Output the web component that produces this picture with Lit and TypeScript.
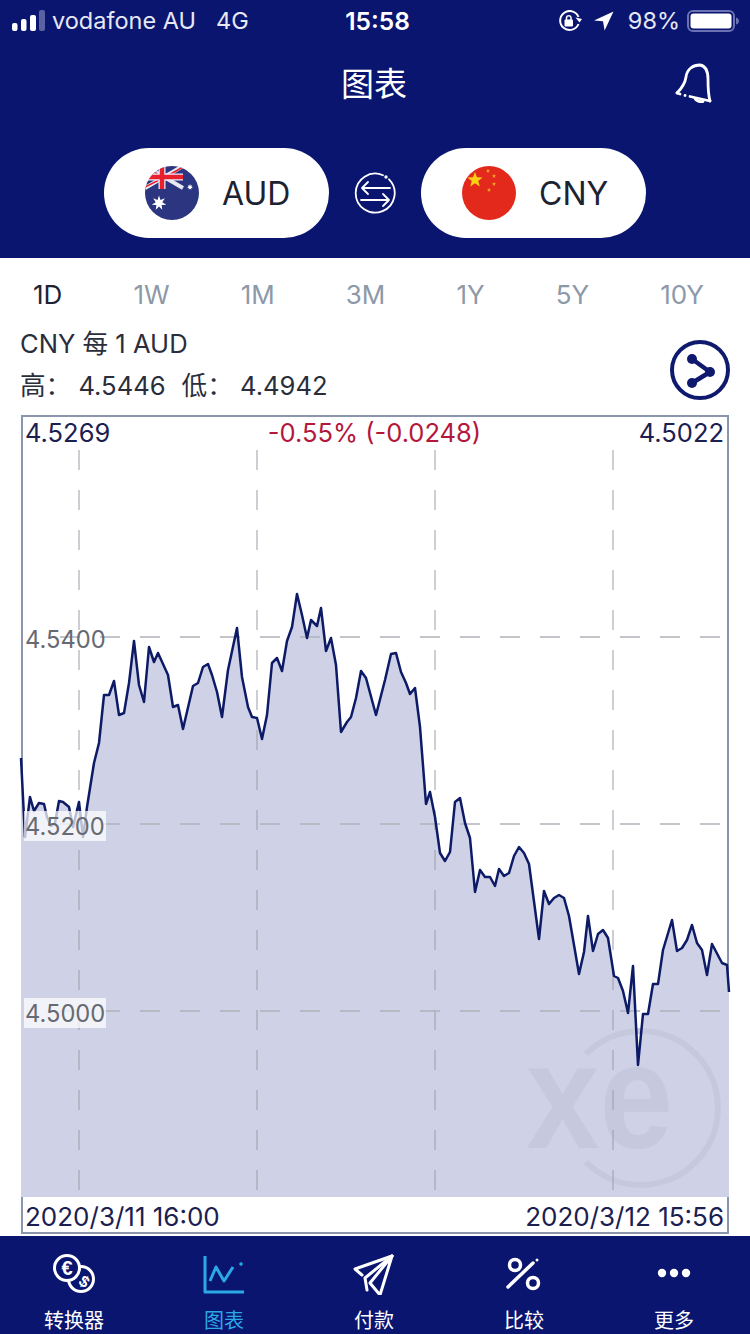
import { LitElement, html, css, svg } from 'lit';
import { customElement } from 'lit/decorators.js';

// page coordinates of the rate line, read off the screenshot
const RATE_LINE: [number, number][] = [
  [21,758],[25,837],[30,797],[34,811],[39,803],[44,804],[47,817],[51,826],[55,823],[59,801],[63,802],[69,807],[73,827],[79,802],[83,837],
  [87,807],[94,763],[99,743],[104,695],[109,695],[114,681],[119,715],[124,713],[129,683],[134,641],[139,685],[144,702],[149,647],[154,662],
  [158,653],[168,675],[173,707],[178,705],[183,729],[193,686],[198,683],[203,667],[208,664],[212,675],[217,692],[222,717],[228,670],[237,628],
  [242,677],[248,707],[252,717],[257,718],[262,739],[267,715],[272,663],[277,658],[282,671],[287,641],[292,627],[297,594],[302,615],[307,638],
  [311,620],[317,626],[321,608],[326,651],[331,638],[336,665],[341,732],[347,722],[351,717],[356,698],[361,671],[366,678],[376,715],[385,680],
  [391,654],[396,653],[401,672],[406,683],[410,694],[415,688],[420,727],[426,804],[430,792],[435,817],[440,853],[445,861],[450,852],[455,802],
  [460,798],[465,823],[470,838],[475,892],[480,870],[485,877],[490,877],[495,886],[499,869],[504,876],[509,873],[514,856],[519,847],[524,853],
  [529,864],[539,939],[544,891],[549,904],[554,898],[559,895],[564,898],[569,916],[579,974],[584,952],[588,916],[593,951],[598,934],[603,930],
  [608,938],[614,976],[618,978],[623,991],[628,1013],[633,966],[638,1065],[643,1014],[648,1014],[653,984],[658,984],[663,950],[672,920],[677,951],
  [682,948],[687,940],[692,925],[697,943],[702,950],[707,975],[712,944],[722,963],[727,965],[729,992],
];

const RANGES = ['1D', '1W', '1M', '3M', '1Y', '5Y', '10Y'];

const linePoints = RATE_LINE.map((p) => p.join(',')).join(' ');
const areaPoints = `21,1197 ${linePoints} 729,1197`;

// n pointed star, for the flags
function star(cx: number, cy: number, r: number, n: number, inner: number) {
  const pts: string[] = [];
  for (let i = 0; i < n * 2; i++) {
    const a = -Math.PI / 2 + (i * Math.PI) / n;
    const d = i % 2 ? r * inner : r;
    pts.push(`${(cx + d * Math.cos(a)).toFixed(2)},${(cy + d * Math.sin(a)).toFixed(2)}`);
  }
  return pts.join(' ');
}

const ausFlag = html`<svg class="flag" viewBox="0 0 54 54">
  <defs><clipPath id="au"><circle cx="27" cy="27" r="27"></circle></clipPath></defs>
  <g clip-path="url(#au)">
    <rect width="54" height="54" fill="#2b3580"></rect>
    <path d="M0 0L38 22M38 0L0 22" stroke="#e9e9f2" stroke-width="4"></path>
    <path d="M0 1L14 9M38 1L24 9M0 21L14 14" stroke="#e8202c" stroke-width="1.500"></path>
    <path d="M17 0V23M0 11H38" stroke="#eef" stroke-width="7"></path>
    <path d="M17 0V23M0 11H38" stroke="#e8202c" stroke-width="4.500"></path>
    <polygon points=${star(14, 37, 7.5, 7, 0.45)} fill="#fff"></polygon>
    <polygon points=${star(45, 21, 3, 7, 0.5)} fill="#fff"></polygon>
  </g>
</svg>`;

const cnFlag = html`<svg class="flag" viewBox="0 0 54 54">
  <circle cx="27" cy="27" r="27" fill="#e2291c"></circle>
  <polygon points=${star(13, 14, 8, 5, 0.42)} fill="#fbd116"></polygon>
  <polygon points=${star(26, 5, 2.2, 5, 0.42)} fill="#f5a623"></polygon>
  <polygon points=${star(32, 10, 2.2, 5, 0.42)} fill="#f5a623"></polygon>
  <polygon points=${star(32, 18, 2.2, 5, 0.42)} fill="#f5a623"></polygon>
  <polygon points=${star(27, 24, 2.2, 5, 0.42)} fill="#f5a623"></polygon>
</svg>`;

@customElement('app-root')
export class AppRoot extends LitElement {
  static styles = css`
    :host {
      display: block;
      width: 750px;
      height: 1334px;
      overflow: hidden;
      background: #fff;
      font-family: Inter, 'Noto Sans CJK SC', sans-serif;
      color: #1d2233;
    }
    .top {
      height: 258px;
      background: #0a1570;
      color: #fff;
      display: flex;
      flex-direction: column;
    }
    .status {
      height: 41px;
      margin-bottom: 1px;
      display: grid;
      grid-template-columns: 1fr auto 1fr;
      align-items: center;
      padding: 0 11px 0 12px;
      font-size: 23.5px;
      color: #e6e8f4;
    }
    .status .left, .status .right { display: flex; align-items: center; }
    .status .right { justify-content: flex-end; }
    .status .carrier { margin-left: 7px; }
    .status .net { margin-left: 20px; }
    .status .time { margin-left: 4px; font-weight: 600; font-size: 24.5px; color: #fff; }
    .status .pct { margin: 0 7px 0 14px; }
    .title {
      height: 84px;
      display: grid;
      grid-template-columns: 1fr auto 1fr;
      align-items: center;
      padding: 0 35px 0 33px;
      font-size: 33px;
    }
    .title span { margin-bottom: 4px; }
    .title svg { justify-self: end; }
    .pair {
      display: flex;
      justify-content: center;
      align-items: center;
      gap: 25px;
      margin-top: 22px;
    }
    .pill {
      width: 225px;
      height: 90px;
      border-radius: 45px;
      background: #fff;
      color: #1d2233;
      display: flex;
      align-items: center;
      box-sizing: border-box;
      padding-left: 41px;
      gap: 23px;
      font-size: 32px;
    }
    .flag { width: 54px; height: 54px; display: block; }
    .ranges {
      display: flex;
      justify-content: space-between;
      padding: 0 46px 0 33px;
      height: 72px;
      align-items: center;
      font-size: 26px;
      color: #8d99a8;
    }
    .ranges .on { color: #1d2233; }
    .info {
      display: flex;
      justify-content: space-between;
      padding: 0 20px 0 20px;
      height: 85px;
    }
    .info .lines { margin-top: -7px; font-size: 25.6px; line-height: 42px; color: #2a2e3c; }
    .info .stats { display: flex; gap: 16px; }
    .info svg { margin-top: 10px; }
    .chart {
      margin: 0 21px;
      height: 819px;
      box-sizing: border-box;
      border: 2px solid #8b95ad;
      display: flex;
      flex-direction: column;
      font-size: 26px;
      color: #1b2050;
    }
    .chart .head, .chart .foot {
      display: flex;
      justify-content: space-between;
      align-items: center;
      box-sizing: border-box;
      padding-left: 2px;
      padding-right: 3px;
    }
    .chart .head { height: 33px; padding-bottom: 3px; font-size: 25.5px; }
    .chart .foot { height: 34px; padding-top: 4px; }
    .chart .change { color: #b3173c; }
    .chart svg { display: block; overflow: visible; }
    .axis { font: 23.7px Inter, sans-serif; fill: #666a72; }
    nav {
      margin-top: 2px;
      height: 98px;
      background: #0a1570;
      display: grid;
      grid-template-columns: repeat(5, 150px);
      color: #fff;
    }
    nav .item {
      display: flex;
      flex-direction: column;
      align-items: center;
      font-size: 20px;
      line-height: 24px;
      position: relative;
      left: -1px;
    }
    nav .item svg { display: block; margin-top: 15px; margin-bottom: 14px; }
    nav .on { color: #2aa9e6; }
  `;

  private axisLabel(y: number, text: string, backed: boolean) {
    return svg`
      ${backed ? svg`<rect x="24" y=${y - 15} width="82" height="30" fill="#fff" opacity="0.72"></rect>` : ''}
      <text class="axis" x="25" y=${y + 9}>${text}</text>`;
  }

  private chartSvg() {
    const vertical = [79, 257, 435, 613];
    const horizontal = [637, 824, 1011];
    return html`<svg width="704" height="747" viewBox="23 450 704 747">
      <polygon points=${areaPoints} fill="#cfd2e6"></polygon>
      <text x="526" y="1148" fill="#c6c9de" font-family="Liberation Sans" font-weight="700" font-size="150" textLength="147" lengthAdjust="spacingAndGlyphs">xe</text>
      <path d="M586 1054A77 77 0 1 1 586 1162" fill="none" stroke="#c6c9de" stroke-width="6"></path>
      ${vertical.map((x) => svg`<line x1=${x} x2=${x} y1="450" y2="1197" stroke="#9a9da6" stroke-width="1" stroke-dasharray="20 20"></line>`)}
      ${horizontal.map((y) => svg`<line x1="60" x2="727" y1=${y} y2=${y} stroke="#b0b2ba" stroke-width="1.500" stroke-dasharray="20 20"></line>`)}
      <polyline points=${linePoints} fill="none" stroke="#0d1a66" stroke-width="2.500" stroke-linejoin="round"></polyline>
      ${this.axisLabel(639, '4.5400', false)}
      ${this.axisLabel(826, '4.5200', true)}
      ${this.axisLabel(1013, '4.5000', true)}
    </svg>`;
  }

  render() {
    return html`
      <div class="top">
        <div class="status">
          <span class="left">
            <svg width="33" height="21" viewBox="0 0 33 21">
              <rect x="0" y="13" width="5.500" height="8" rx="2" fill="#fff"></rect>
              <rect x="9" y="9" width="5.500" height="12" rx="2" fill="#fff"></rect>
              <rect x="18" y="5" width="6" height="16" rx="2" fill="#fff"></rect>
              <rect x="27" y="0" width="6" height="21" rx="2" fill="#5a62a3"></rect>
            </svg>
            <span class="carrier">vodafone AU</span>
            <span class="net">4G</span>
          </span>
          <span class="time">15:58</span>
          <span class="right">
            <svg width="24" height="22" viewBox="0 0 24 22" fill="none">
              <path d="M20.500 7A9.500 9.500 0 1 0 20.500 14" stroke="#fff" stroke-width="2"></path>
              <path d="M17.500 7.500L24 9l-2.500 3.500z" fill="#fff"></path>
              <rect x="6.500" y="9.500" width="8.500" height="7" rx="1" fill="#fff"></rect>
              <path d="M8.500 10V7.500a2.300 2.300 0 0 1 4.500 0V10" stroke="#fff" stroke-width="1.500"></path>
            </svg>
            <svg style="margin-left:12px" width="20" height="20" viewBox="0 0 20 20">
              <path d="M19.500 .5L0 9.500l9 .8 1.600 9.200z" fill="#fff"></path>
            </svg>
            <span class="pct">98%</span>
            <svg width="52" height="22" viewBox="0 0 52 22" fill="none">
              <rect x="1" y="1" width="46" height="20" rx="5" stroke="#6a72b3" stroke-width="2"></rect>
              <rect x="3.500" y="3.500" width="41" height="15" rx="3" fill="#fff"></rect>
              <path d="M49 7.500c2 .5 3 2 3 3.500s-1 3-3 3.500z" fill="#6a72b3"></path>
            </svg>
          </span>
        </div>
        <div class="title">
          <i></i>
          <span>图表</span>
          <svg width="40" height="44" viewBox="0 0 40 44" fill="none" stroke="#fff" stroke-width="2.800" stroke-linecap="round" stroke-linejoin="round">
            <path d="M2 31C7 26 10 22 11 15 12 7 18 3 25 3 31 4 33 9 33 17 33 25 33 32 35 39"></path>
            <path d="M2 31L5 32M10 33.500h.1M15 34.500L35 39"></path>
            <path d="M20 36.500c1 2.500 5 3.500 8 3"></path>
          </svg>
        </div>
        <div class="pair">
          <div class="pill">${ausFlag}<span>AUD</span></div>
          <svg width="42" height="42" viewBox="0 0 42 42" fill="none" stroke="#fff" stroke-width="1.800" stroke-linecap="round" stroke-linejoin="round">
            <path d="M35 7.300A19.500 19.500 0 1 1 29 3.200"></path>
            <circle cx="32" cy="5" r="0.800" fill="#fff"></circle>
            <path d="M36 16H8M14 10L8 16 14 22"></path>
            <path d="M7 28H35M29 22L35 28 29 34"></path>
          </svg>
          <div class="pill">${cnFlag}<span>CNY</span></div>
        </div>
      </div>

      <div class="ranges">
        ${RANGES.map((r, i) => html`<span class=${i === 0 ? 'on' : ''}>${r}</span>`)}
      </div>

      <div class="info">
        <div class="lines">
          <div>CNY 每 1 AUD</div>
          <div class="stats"><span>高： 4.5446</span><span>低： 4.4942</span></div>
        </div>
        <svg width="60" height="60" viewBox="0 0 60 60" fill="none">
          <circle cx="30" cy="30" r="28" stroke="#0f1a6e" stroke-width="4"></circle>
          <path d="M22 19L40 32 22 43" stroke="#0f1a6e" stroke-width="4.500"></path>
          <circle cx="22" cy="19" r="5" fill="#0f1a6e"></circle>
          <circle cx="40" cy="32" r="5" fill="#0f1a6e"></circle>
          <circle cx="22" cy="43" r="5" fill="#0f1a6e"></circle>
        </svg>
      </div>

      <div class="chart">
        <div class="head">
          <span>4.5269</span>
          <span class="change">-0.55% (-0.0248)</span>
          <span>4.5022</span>
        </div>
        ${this.chartSvg()}
        <div class="foot">
          <span>2020/3/11 16:00</span>
          <span>2020/3/12 15:56</span>
        </div>
      </div>

      <nav>
        <div class="item">
          <svg width="46" height="44" viewBox="0 0 46 44" fill="none" stroke="#fff" stroke-width="3">
            <circle cx="30" cy="28" r="12.500"></circle>
            <circle cx="16" cy="17" r="12.500" fill="#0a1570"></circle>
            <text x="16" y="24" font-size="20" font-weight="700" fill="#fff" stroke="none" text-anchor="middle" font-family="Liberation Sans">€</text>
            <text x="33" y="36" font-size="16" font-weight="700" fill="#fff" stroke="none" text-anchor="middle" font-family="Liberation Sans" transform="rotate(35 33 31)">$</text>
          </svg>
          <span>转换器</span>
        </div>
        <div class="item on">
          <svg width="44" height="44" viewBox="0 0 44 44" fill="none" stroke="#2aa9e6" stroke-width="3" stroke-linejoin="round">
            <path d="M3 5V41H42"></path>
            <path d="M8 30L14 16 22 30 31 16"></path>
            <circle cx="39" cy="13" r="1.800" fill="#2aa9e6" stroke="none"></circle>
          </svg>
          <span>图表</span>
        </div>
        <div class="item">
          <svg width="44" height="44" viewBox="0 0 44 44" fill="none" stroke="#fff" stroke-width="3" stroke-linejoin="round" stroke-linecap="round">
            <path d="M40 5L3 18 10 24"></path>
            <path d="M40 5L13 27 15 39"></path>
            <path d="M40 5L18 32 28 44z"></path>
          </svg>
          <span>付款</span>
        </div>
        <div class="item">
          <svg width="44" height="44" viewBox="0 0 44 44" fill="none" stroke="#fff" stroke-width="3.500">
            <circle cx="13" cy="14" r="5.500"></circle>
            <circle cx="31" cy="32" r="5.500"></circle>
            <path d="M6 36L31 12" stroke-linecap="round"></path>
            <circle cx="35" cy="9" r="1.500" fill="#fff" stroke="none"></circle>
          </svg>
          <span>比较</span>
        </div>
        <div class="item">
          <svg width="44" height="44" viewBox="0 0 44 44" fill="#fff">
            <circle cx="10" cy="22" r="4.200"></circle>
            <circle cx="22" cy="22" r="4.200"></circle>
            <circle cx="34" cy="22" r="4.200"></circle>
          </svg>
          <span>更多</span>
        </div>
      </nav>
    `;
  }
}
